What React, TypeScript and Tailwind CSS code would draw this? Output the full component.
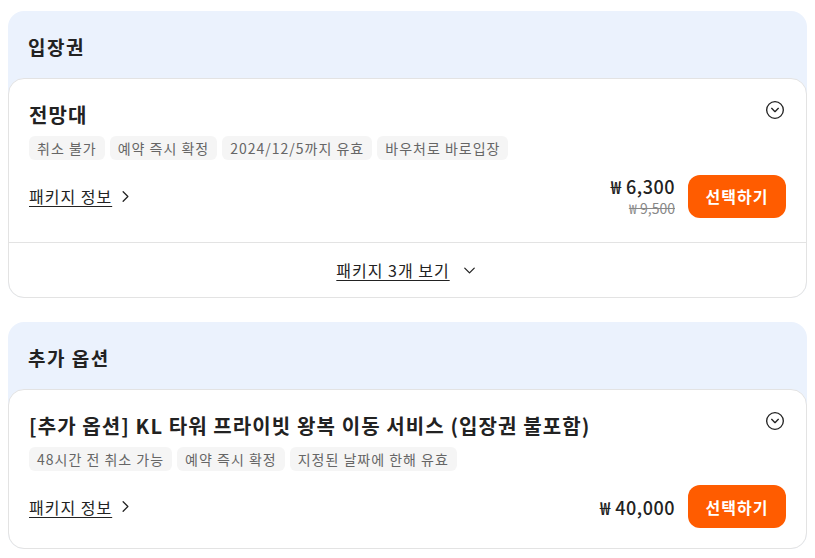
import { CircleChevronDown, ChevronRight, ChevronDown } from "lucide-react";

type Pkg = {
  title: string;
  tags: string[];
  price: string;
  original?: string;
};

function Tag({ label }: { label: string }) {
  return (
    <span className="rounded-md bg-[#f5f5f5] px-2 h-6 flex items-center text-[14px] tracking-[1px] text-[#666]">
      {label}
    </span>
  );
}

function PackageBody({ pkg, bottom }: { pkg: Pkg; bottom: string }) {
  return (
    <div className={"px-5 pt-[23px] " + bottom}>
      <div className="flex items-start justify-between">
        <h3 className="text-[20px] font-bold leading-[26px] tracking-[1.1px] text-[#222]">{pkg.title}</h3>
        <CircleChevronDown className="-mt-0.5 mr-px shrink-0 text-[#222]" size={20} strokeWidth={1.6} />
      </div>
      <div className="mt-2 flex gap-[5px]">
        {pkg.tags.map((t) => (
          <Tag key={t} label={t} />
        ))}
      </div>
      <div className="mt-[14px] flex items-center justify-between">
        <a className="flex items-center text-[16px] tracking-[1px] text-[#222] underline underline-offset-[3px] cursor-pointer">
          패키지 정보
          <ChevronRight size={19} strokeWidth={1.6} className="ml-1" />
        </a>
        <div className="flex items-center gap-[13px]">
          <div className="flex flex-col items-end">
            <span className="text-[18px] font-medium leading-6 tracking-[0.5px] text-[#222]">{pkg.price}</span>
            {pkg.original && (
              <span className="text-[14px] leading-5 text-[#888] line-through">{pkg.original}</span>
            )}
          </div>
          <button className="h-[43px] w-[98px] rounded-xl bg-[#ff5c00] text-[16px] font-bold tracking-[1px] text-white">
            선택하기
          </button>
        </div>
      </div>
    </div>
  );
}

function Section({ heading, children }: { heading: string; children: React.ReactNode }) {
  return (
    <section className="rounded-2xl bg-[#ebf2fd]">
      <h2 className="h-[67px] flex items-center px-5 pt-[6px] text-[19px] font-bold tracking-[1.5px] text-[#222]">{heading}</h2>
      <div className="rounded-2xl border border-[#e3e3e3] bg-white">{children}</div>
    </section>
  );
}

export default function App() {
  const main: Pkg = {
    title: "전망대",
    tags: ["취소 불가", "예약 즉시 확정", "2024/12/5까지 유효", "바우처로 바로입장"],
    price: "₩ 6,300",
    original: "₩ 9,500",
  };
  const extra: Pkg = {
    title: "[추가 옵션] KL 타워 프라이빗 왕복 이동 서비스 (입장권 불포함)",
    tags: ["48시간 전 취소 가능", "예약 즉시 확정", "지정된 날짜에 한해 유효"],
    price: "₩ 40,000",
  };

  return (
    <div
      className="min-h-[558px] bg-white px-2 pt-[11px] flex flex-col gap-6"
      style={{ fontFamily: '"Noto Sans CJK KR", "Noto Sans", sans-serif' }}
    >
      <Section heading="입장권">
        <PackageBody pkg={main} bottom="pb-[24px]" />
        <div className="h-[55px] border-t border-[#e3e3e3] flex items-center justify-center gap-2.5">
          <a className="text-[16px] tracking-[1px] text-[#222] underline underline-offset-[3px] cursor-pointer">패키지 3개 보기</a>
          <ChevronDown size={19} strokeWidth={1.6} className="text-[#222]" />
        </div>
      </Section>
      <Section heading="추가 옵션">
        <PackageBody pkg={extra} bottom="pb-5" />
      </Section>
    </div>
  );
}
